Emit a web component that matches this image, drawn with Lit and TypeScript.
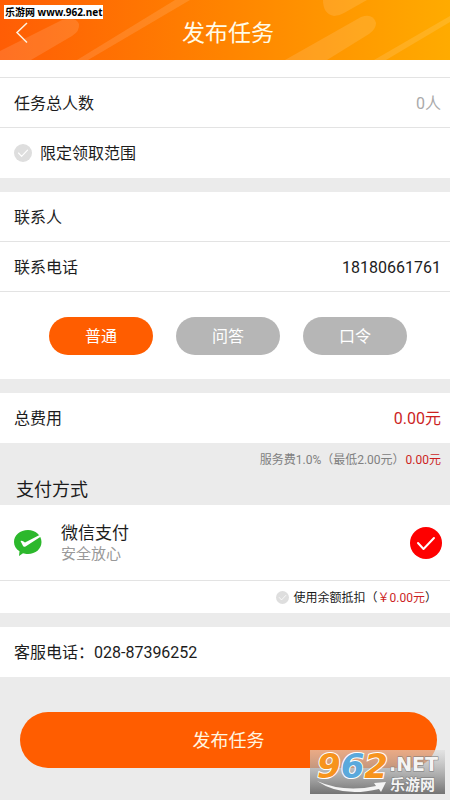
import { LitElement, html, css, svg } from "lit";
import { customElement, state } from "lit/decorators.js";

const tick = svg`<path d="M8 16 L13.500 22 L24 11" fill="none" stroke="#fff" stroke-width="2" stroke-linecap="round" stroke-linejoin="round"></path>`;

@customElement("app-root")
export class AppRoot extends LitElement {
  @state() private kind = "普通";

  static styles = css`
    :host {
      display: block;
      position: relative;
      min-height: 100vh;
      overflow: hidden;
      background: #ebebeb;
      color: #1c1c1c;
      font: 16px/24px Roboto, "Noto Sans CJK SC", sans-serif;
    }
    * { box-sizing: border-box; }
    button, input { font: inherit; color: inherit; border: 0; margin: 0; padding: 0; background: none; }
    header {
      position: relative;
      display: grid;
      place-items: center;
      height: 60px;
      padding: 8px 0 0 6px;
      background: linear-gradient(90deg, #ff5d05, #ff8400 50%, #ffab00);
    }
    .streaks { position: absolute; inset: 0; width: 100%; height: 100%; }
    h1 { position: relative; margin: 0; font-size: 23px; line-height: 32px; font-weight: 400; color: #fffbe8; }
    .back { position: absolute; left: 12px; top: 20px; width: 20px; height: 26px; }
    .back svg { display: block; }
    .row {
      display: flex;
      align-items: center;
      gap: 8px;
      height: 50px;
      padding: 0 9px 0 14px;
      background: #fff;
    }
    .text, .field { padding-top: 2px; }
    .line { border-bottom: 1px solid #e3e3e3; }
    .stub { height: 18px; background: #fff; border-bottom: 1px solid #e3e3e3; }
    .gap { height: 14px; }
    .field { flex: 1; min-width: 0; text-align: right; outline: 0; }
    .end { margin-left: auto; }
    .muted { color: #aaa; }
    .red { color: #cc1f1f; }
    .pick { position: relative; display: grid; flex: none; width: 18px; height: 18px; }
    .pick input { appearance: none; width: 100%; height: 100%; border-radius: 50%; background: #dedede; }
    .pick svg { position: absolute; inset: 0; width: 100%; height: 100%; pointer-events: none; }
    .small { width: 13px; height: 13px; }
    .big { width: 32px; height: 32px; margin-left: auto; }
    .big input { background: #fe0000; }
    .kinds {
      display: flex;
      gap: 23px;
      padding: 25px 43px 24px 49px;
      background: #fff;
    }
    .kind { flex: 1; height: 38px; padding-top: 2px; border-radius: 19px; background: #b6b6b6; color: #fff; }
    .kind.on { background: #ff5d00; }
    .fee { display: flex; justify-content: flex-end; gap: 1px; padding: 5px 9px 4px; font-size: 12px; color: #808080; }
    h2 { margin: 0; padding: 0 16px 1px; font-size: 18px; line-height: 28px; font-weight: 400; }
    .pay { height: 76px; gap: 19px; padding-right: 8px; border-bottom: 1px solid #e3e3e3; }
    .pay p { margin: 0; line-height: 21px; font-size: 17px; }
    .pay .sub { font-size: 15px; color: #999; }
    .balance { height: 32px; gap: 5px; justify-content: flex-end; padding-right: 13px; font-size: 12px; }
    .foot { padding: 35px 13px 32px 20px; }
    .submit { display: block; width: 100%; height: 56px; padding-top: 2px; border-radius: 28px; background: #ff5d00; color: #fff6e0; font-size: 18px; }
    .site {
      position: absolute;
      left: 4px;
      top: 5px;
      height: 14px;
      padding: 0 1px;
      background: #fff;
      color: #000;
      font: 700 10px/14px "Noto Sans", "Noto Sans CJK SC", sans-serif;
      white-space: nowrap;
    }
    .mark { position: absolute; right: 5px; top: 750px; width: 135px; height: 44px; overflow: visible; pointer-events: none; }
    .digits { font: italic 700 34px "DejaVu Sans", sans-serif; paint-order: stroke; stroke: #fff; stroke-width: 2px; }
    .net { font: 700 19px "DejaVu Sans", sans-serif; }
    .cn { font: 700 15px "Noto Sans CJK SC", sans-serif; }
    .pale { fill: #f4f4f4; paint-order: stroke; stroke: #777; stroke-width: 1px; }
  `;

  render() {
    return html`
      <header>
        <svg class="streaks" viewBox="0 0 450 60" preserveAspectRatio="none" aria-hidden="true">
          <g fill="#fff" fill-opacity=".12">
            <path d="M0 51 L62 20 Q76 16 79 24 Q80 31 72 36 L31 60 H0Z"></path>
            <path d="M77 60 L175 0 H190 L88 60Z"></path>
            <path d="M285 60 L361 17 Q373 13 376 23 Q376 29 369 34 L327 60Z"></path>
            <path d="M323 0 Q323 14 334 16 Q339 16 344 13 L367 0Z"></path>
            <path d="M374 60 L450 16 V22 L386 60Z"></path>
          </g>
        </svg>
        <button class="back" aria-label="返回">
          <svg width="20" height="26" viewBox="0 0 20 26"><path d="M15 3 L5 12.500 L15 22.500" fill="none" stroke="#fff3e0" stroke-width="1.500"></path></svg>
        </button>
        <h1>发布任务</h1>
      </header>
      <main>
        <div class="stub"></div>
        <div class="row line"><span class="text">任务总人数</span><span class="text end muted">0人</span></div>
        <label class="row">
          <span class="pick"><input type="checkbox" /><svg viewBox="0 0 32 32">${tick}</svg></span>
          <span class="text">限定领取范围</span>
        </label>
        <div class="gap"></div>
        <label class="row line"><span class="text">联系人</span><input class="field" type="text" /></label>
        <label class="row line"><span class="text">联系电话</span><input class="field" type="tel" value="18180661761" /></label>
        <div class="kinds">
          ${["普通", "问答", "口令"].map(
            (k) => html`<button class="kind ${k === this.kind ? "on" : ""}" @click=${() => (this.kind = k)}>${k}</button>`
          )}
        </div>
        <div class="gap"></div>
        <div class="row"><span class="text">总费用</span><span class="text end red">0.00元</span></div>
        <div class="fee"><span>服务费1.0%（最低2.00元）</span><span class="red">0.00元</span></div>
        <h2>支付方式</h2>
        <label class="row pay">
          <svg width="28" height="26" viewBox="0 0 28 26" aria-hidden="true">
            <path d="M14 0 C21.500 0 27.500 5 27.500 12 C27.500 19 21.500 24 14 24 C12 24 10.500 23.700 9 23.200 L5 26 L5.500 21.300 C2 19 0 16 0 12 C0 5 6 0 14 0Z" fill="#2cb82c"></path>
            <path d="M6.500 11 Q8 10 11 12.400 L25.500 5 L27 6.500 L11.500 16.500 Q9.600 17.300 8.800 15.500Z" fill="#fff"></path>
          </svg>
          <span class="text"><p>微信支付</p><p class="sub">安全放心</p></span>
          <span class="pick big"><input type="radio" name="pay" checked /><svg viewBox="0 0 32 32">${tick}</svg></span>
        </label>
        <label class="row balance">
          <span class="pick small"><input type="checkbox" /><svg viewBox="0 0 32 32">${tick}</svg></span>
          <span class="text">使用余额抵扣（<span class="red">￥0.00元</span>）</span>
        </label>
        <div class="gap"></div>
        <div class="row"><span class="text">客服电话：028-87396252</span></div>
        <div class="foot"><button class="submit">发布任务</button></div>
      </main>
      <div class="site">乐游网 www.962.net</div>
      <svg class="mark" viewBox="0 0 135 44">
        <defs>
          <linearGradient id="shade" x2="0" y2="1">
            <stop offset="0" stop-color="#ddd" stop-opacity=".6"></stop>
            <stop offset="1" stop-color="#666" stop-opacity=".9"></stop>
          </linearGradient>
        </defs>
        <rect width="135" height="44" fill="url(#shade)"></rect>
        <text class="digits" x="7" y="28"><tspan fill="#f7941d">9</tspan><tspan fill="#5aa9dc">6</tspan><tspan fill="#f7941d">2</tspan></text>
        <text class="net pale" x="79" y="21">.NET</text>
        <text class="cn pale" x="80" y="40">乐游网</text>
        <path d="M7 31 Q34 43 66 36 L64 33 L76 32 L71 42 L69 39 Q32 48 7 31Z" fill="#f4f4f4"></path>
      </svg>
    `;
  }
}
